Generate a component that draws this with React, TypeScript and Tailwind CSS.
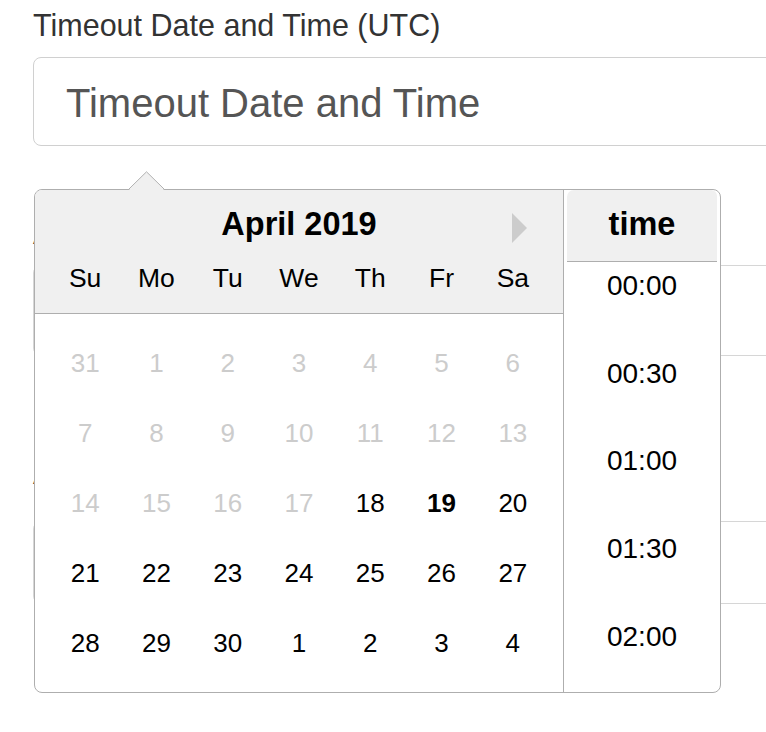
import React from "react";

const dayNames = ["Su", "Mo", "Tu", "We", "Th", "Fr", "Sa"];

interface Day {
  label: number;
  muted?: boolean;
  today?: boolean;
}

const weeks: Day[][] = [
  [31, 1, 2, 3, 4, 5, 6].map((d) => ({ label: d, muted: true })),
  [7, 8, 9, 10, 11, 12, 13].map((d) => ({ label: d, muted: true })),
  [
    { label: 14, muted: true },
    { label: 15, muted: true },
    { label: 16, muted: true },
    { label: 17, muted: true },
    { label: 18 },
    { label: 19, today: true },
    { label: 20 },
  ],
  [21, 22, 23, 24, 25, 26, 27].map((d) => ({ label: d })),
  [28, 29, 30, 1, 2, 3, 4].map((d) => ({ label: d })),
];

const times = ["00:00", "00:30", "01:00", "01:30", "02:00"];

const DatePickerPopup = () => {
  return (
    <div className="absolute left-[34px] top-[189px] w-[687px] h-[504px] border border-[#aeaeae] rounded-[8px] bg-white flex text-black">
      {/* little pointer above the popup */}
      <svg
        className="absolute left-[92px] -top-[19px]"
        width="40"
        height="21"
        viewBox="0 0 40 21"
      >
        <polygon points="0.5,20.5 19.5,1 38.5,20.5" fill="#f0f0f0" />
        <polyline
          points="0.5,19.5 19.5,0.8 38.5,19.5"
          fill="none"
          stroke="#aeaeae"
          strokeWidth="1"
        />
      </svg>

      {/* month */}
      <div className="w-[528px] flex flex-col">
        <div className="relative bg-[#f0f0f0] border-b border-[#aeaeae] rounded-tl-[7px] pt-[14px] pb-[17px]">
          <div className="text-center text-[32.5px] leading-[40px] font-bold">
            April 2019
          </div>
          <button
            type="button"
            className="absolute left-[477px] top-[23px] w-0 h-0 border-y-[15px] border-y-transparent border-l-[15px] border-l-[#cccccc]"
          />
          <div className="mt-[16px] mx-auto w-[499px] grid grid-cols-7 text-[26.5px] leading-[36px]">
            {dayNames.map((n) => (
              <div key={n} className="text-center">
                {n}
              </div>
            ))}
          </div>
        </div>
        <div className="pt-[14px]">
          {weeks.map((week, i) => (
            <div key={i} className="mx-auto w-[499px] grid grid-cols-7">
              {week.map((day, j) => (
                <div
                  key={j}
                  className={`h-[70px] flex items-center justify-center text-[26px] ${
                    day.muted ? "text-[#cccccc]" : "text-black"
                  } ${day.today ? "font-bold" : ""}`}
                >
                  {day.label}
                </div>
              ))}
            </div>
          ))}
        </div>
      </div>

      {/* time */}
      <div className="w-[157px] border-l border-[#aeaeae]">
        <div className="w-[150px] ml-[3px] h-full flex flex-col">
          <div className="bg-[#f0f0f0] border-b border-[#aeaeae] rounded-tl-[7px] rounded-tr-[6px] pt-[14px] pb-[17px] text-center text-[32.5px] leading-[40px] font-bold">
            time
          </div>
          <div className="flex-1 overflow-hidden">
            <ul className="-mt-[20px]">
              {times.map((t) => (
                <li
                  key={t}
                  className="h-[87.75px] flex items-center justify-center text-[28px]"
                >
                  {t}
                </li>
              ))}
            </ul>
          </div>
        </div>
      </div>
    </div>
  );
};

const App = () => {
  return (
    <div className="relative h-screen overflow-hidden bg-white pl-[33px] pt-[4px] font-['Liberation_Sans',Arial,Helvetica,sans-serif]">
      <label className="block h-[42px] leading-[42px] text-[30.5px] text-[#333333]">
        Timeout Date and Time (UTC)
      </label>
      <div className="mt-[11px] w-[780px] h-[89px] border border-[#d0d0d0] rounded-[8px] pl-[32px] pt-[23px] text-[40px] leading-[44px] text-[#555555]">
        Timeout Date and Time
      </div>

      <label className="block mt-[66px] h-[42px] leading-[42px] text-[30.5px] text-[#333333]">
        Amount
      </label>
      <div className="mt-[11px] w-[780px] h-[91px] border border-[#d6d6d6] rounded-[8px]" />

      <label className="block mt-[96px] h-[42px] leading-[42px] text-[30.5px] text-[#333333]">
        Additional Notes
      </label>
      <div className="mt-[27px] w-[780px] h-[83px] border border-[#d6d6d6] rounded-[8px]" />

      <DatePickerPopup />
    </div>
  );
};

export default App;
